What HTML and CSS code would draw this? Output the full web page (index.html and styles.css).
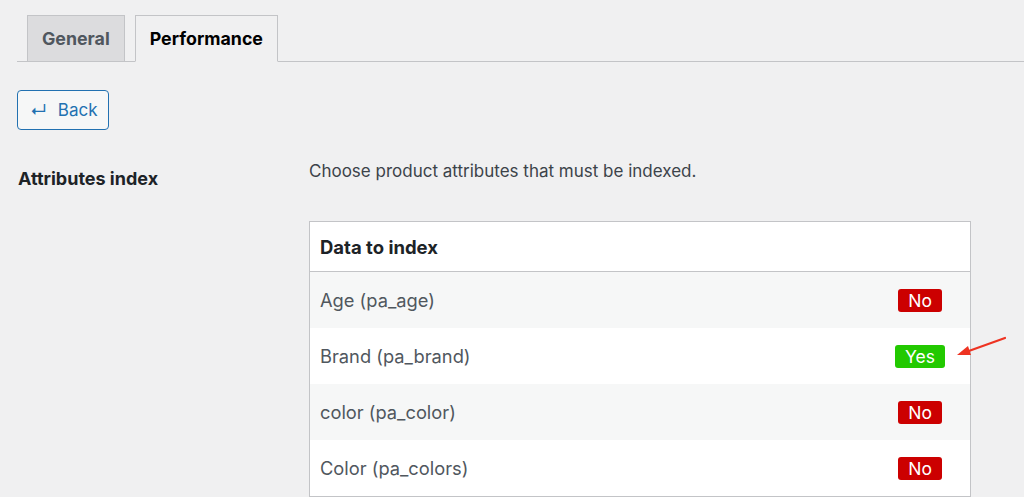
FILE: index.html
```html
<!DOCTYPE html>
<html>
<head>
<meta charset="utf-8">
<link rel="stylesheet" href="styles.css">
</head>
<body>
<nav class="tabs">
  <a class="tab">General</a>
  <a class="tab tab-active">Performance</a>
</nav>
<div class="actions">
  <button class="btn-back"><span class="back-icon">↵</span>Back</button>
</div>
<div class="form-row">
  <div class="form-label">Attributes index</div>
  <div class="form-field">
    <p class="desc">Choose product attributes that must be indexed.</p>
    <div class="idx-table">
      <div class="idx-head">Data to index</div>
      <div class="idx-row alt"><span>Age (pa_age)</span><span class="badge no">No</span></div>
      <div class="idx-row"><span>Brand (pa_brand)</span><span class="badge yes">Yes</span>
        <svg class="arrow" width="60" height="30" viewBox="0 0 60 30"><path d="M53 5 L14 19" stroke="#ee3322" stroke-width="2.2" fill="none" stroke-linecap="round"/><path d="M5 22 L16 13 L19 22 Z" fill="#ee3322"/></svg>
      </div>
      <div class="idx-row alt"><span>color (pa_color)</span><span class="badge no">No</span></div>
      <div class="idx-row"><span>Color (pa_colors)</span><span class="badge no">No</span></div>
    </div>
  </div>
</div>
</body>
</html>
```
FILE: styles.css
```css
html, body { margin: 0; padding: 0; }
body {
  background: #f0f0f1;
  font-family: Inter, "Liberation Sans", Arial, sans-serif;
  color: #3c434a;
  font-size: 17px;
  height: 497px;
  overflow: hidden;
}
.tabs {
  display: flex;
  gap: 10px;
  margin: 15px 0 0 17px;
  padding-left: 10px;
  border-bottom: 1px solid #c3c4c7;
  height: 46px;
  align-items: flex-end;
}
.tab {
  box-sizing: border-box;
  height: 47px;
  margin-bottom: -1px;
  padding: 0 14px;
  display: flex;
  align-items: center;
  font-weight: 700;
  font-size: 17.8px;
  color: #50575e;
  background: #dcdcde;
  border: 1px solid #c3c4c7;
  border-bottom: 1px solid #c3c4c7;
}
.tab-active {
  background: #f0f0f1;
  color: #000;
  border-bottom-color: #f0f0f1;
}
.actions { padding: 28px 0 0 17px; }
.btn-back {
  box-sizing: border-box;
  width: 92px;
  height: 40px;
  border: 1px solid #2271b1;
  border-radius: 4px;
  background: #f6f7f7;
  color: #2271b1;
  font-family: inherit;
  font-size: 17px;
  display: flex;
  align-items: center;
  padding: 0 0 0 12px;
  gap: 11px;
}
.back-icon { font-size: 17px; position: relative; top: 1px; }
.form-row {
  display: flex;
  padding: 20px 0 0 18px;
}
.form-label {
  width: 291px;
  font-weight: 700;
  font-size: 18px;
  color: #1d2327;
  padding-top: 18px;
}
.form-field { width: 662px; }
.desc { margin: 10px 0 39px 0; line-height: 22px; }
.idx-table {
  border: 1px solid #c3c4c7;
  background: #fff;
}
.idx-head {
  height: 50px;
  box-sizing: border-box;
  padding: 0 10px;
  display: flex;
  align-items: center;
  font-weight: 700;
  font-size: 18.5px;
  color: #1d2327;
  border-bottom: 1px solid #c3c4c7;
}
.idx-row {
  position: relative;
  height: 56px;
  display: flex;
  align-items: center;
  justify-content: space-between;
  padding: 0 28px 0 10px;
  color: #50575e;
  font-size: 18.3px;
}
.idx-row.alt { background: #f6f7f7; }
.badge {
  color: #fff;
  border-radius: 3px;
  padding: 1px 10px;
  line-height: 21px;
  font-size: 17.5px;
}
.badge.no { background: #cc0000; }
.badge.yes { background: #22c900; margin-right: -3px; }
.arrow { position: absolute; right: -42px; top: 5px; }
```
